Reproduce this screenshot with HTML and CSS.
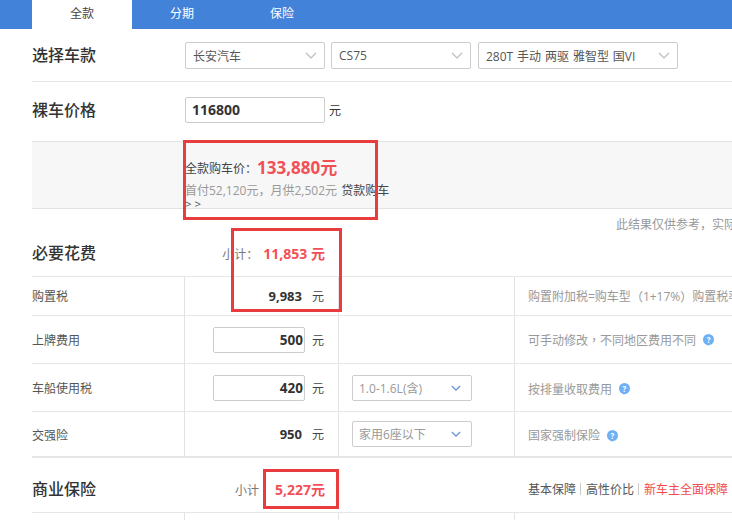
FILE: index.html
```html
<!DOCTYPE html>
<html lang="zh">
<head>
<meta charset="utf-8">
<title>购车计算</title>
<link rel="stylesheet" href="styles.css">
</head>
<body>
<nav class="tabs">
  <a class="tab active">全款</a>
  <a class="tab">分期</a>
  <a class="tab">保险</a>
</nav>
<main class="content">
  <section class="head-row choose">
    <h2 class="title">选择车款</h2>
    <div class="sel w140"><span>长安汽车</span><svg class="chev" viewBox="0 0 12 7"><path d="M1 1l5 5 5-5"/></svg></div>
    <div class="sel w140"><span>CS75</span><svg class="chev" viewBox="0 0 12 7"><path d="M1 1l5 5 5-5"/></svg></div>
    <div class="sel w200"><span class="spaced">280T 手动 两驱 雅智型 国VI</span><svg class="chev" viewBox="0 0 12 7"><path d="M1 1l5 5 5-5"/></svg></div>
  </section>
  <section class="head-row price">
    <h2 class="title">裸车价格</h2>
    <div class="input price-input">116800</div>
    <span class="unit-big">元</span>
  </section>
  <section class="summary">
    <p class="sum-line"><span>全款购车价<span class="p">：</span></span><b class="sum-num">133,880元</b></p>
    <p class="sum-sub"><span class="muted">首付52,120元<span class="p">，</span>月供2,502元</span> <span class="loan">贷款购车</span><span class="arrows">&gt; &gt;</span></p>
  </section>
  <p class="note">此结果仅供参考<span class="p">，</span>实际费用以当地缴费为准</p>
  <section class="sub-head need">
    <h2 class="title">必要花费</h2>
    <div class="subtotal"><span class="sub-label">小计<span class="p">：</span></span><b class="red">11,853 元</b></div>
  </section>
  <section class="row r1">
    <div class="c1">购置税</div>
    <div class="c2"><b>9,983</b><span class="unit">元</span></div>
    <div class="c3"></div>
    <div class="c4">购置附加税=购车型<span class="p">（</span>1+17%<span class="p">）</span>购置税率</div>
  </section>
  <section class="row r2">
    <div class="c1">上牌费用</div>
    <div class="c2"><div class="input num">500</div><span class="unit">元</span></div>
    <div class="c3"></div>
    <div class="c4">可手动修改<span class="p">，</span>不同地区费用不同<i class="help">?</i></div>
  </section>
  <section class="row r3">
    <div class="c1">车船使用税</div>
    <div class="c2"><div class="input num">420</div><span class="unit">元</span></div>
    <div class="c3"><div class="sel small"><span>1.0-1.6L(含)</span><svg class="chev blue" viewBox="0 0 12 7"><path d="M1 1l5 5 5-5"/></svg></div></div>
    <div class="c4 low">按排量收取费用<i class="help">?</i></div>
  </section>
  <section class="row r4">
    <div class="c1 low">交强险</div>
    <div class="c2"><b>950</b><span class="unit">元</span></div>
    <div class="c3"><div class="sel small"><span>家用6座以下</span><svg class="chev blue" viewBox="0 0 12 7"><path d="M1 1l5 5 5-5"/></svg></div></div>
    <div class="c4 low">国家强制保险<i class="help">?</i></div>
  </section>
  <section class="sub-head biz">
    <h2 class="title">商业保险</h2>
    <div class="subtotal"><span class="sub-label">小计</span><b class="red">5,227元</b></div>
    <div class="plans"><span>基本保障</span><i class="sep"></i><span>高性价比</span><i class="sep"></i><span class="plan-red">新车主全面保障</span></div>
  </section>
  <section class="row last">
    <div class="c1"></div><div class="c2"></div><div class="c3"></div><div class="c4"></div>
  </section>
</main>
<div class="mark m1"></div>
<div class="mark m2"></div>
<div class="mark m3"></div>
</body>
</html>
```
FILE: styles.css
```css
* { box-sizing: border-box; }
html, body { margin: 0; height: 520px; overflow: hidden; background: #fff; }
body {
  position: relative;
  width: 732px;
  font-family: "Open Sans", "Noto Sans CJK SC", sans-serif;
  font-size: 12px;
  color: #333;
}
p, h2 { margin: 0; }
.p { font-family: "Noto Sans CJK TC", sans-serif; }
.tabs { display: flex; height: 29px; padding-left: 32px; background: #4382d9; }
.tab { width: 100px; text-align: center; line-height: 27px; color: #fff; font-size: 12px; }
.tab.active { background: #fff; color: #444; }
.content { width: 700px; padding-left: 32px; box-sizing: content-box; }
.title { font-size: 16px; font-weight: 500; color: #333; line-height: 24px; width: 153px; flex: none; }
.head-row { display: flex; align-items: center; }
.choose { height: 53px; border-bottom: 1px solid #e6e6e6; width: 700px; gap: 6px; padding-top: 1px; }
.choose .title { margin-right: -6px; margin-bottom: 2px; }
.choose .w200 { margin-left: 1px; }
.price { height: 59px; padding-bottom: 4px; }
.sel {
  display: flex; align-items: center; justify-content: space-between;
  height: 27px; padding: 0 7px; border: 1px solid #ccc; border-radius: 2px;
  background: #fff; color: #555; font-size: 12px; flex: none;
}
.spaced { word-spacing: 0.8px; }
.w140 { width: 140px; }
.w200 { width: 200px; }
.chev { width: 12px; height: 7px; fill: none; stroke: #bbb; stroke-width: 1.2; }
.chev.blue { stroke: #6f9bd6; stroke-width: 1.6; width: 10px; height: 6px; }
.input {
  height: 26px; border: 1px solid #ccc; border-radius: 2px; background: #fff;
  font-weight: 700; font-size: 14px; color: #333; display: flex; align-items: center;
}
.price-input { width: 140px; padding-left: 6px; }
.unit-big { margin-left: 4px; font-size: 12px; color: #333; }
.summary {
  height: 68px; width: 700px; background: #f7f7f7;
  border-top: 1px solid #e2e2e2; border-bottom: 1px solid #e2e2e2;
  padding: 15px 0 0 153px;
}
.sum-line { display: flex; align-items: center; height: 22px; line-height: 22px; white-space: nowrap; color: #444; }
.sum-num { color: #f25056; font-size: 17px; font-weight: 700; }
.sum-sub { line-height: 14px; margin-top: 4px; font-size: 12px; white-space: nowrap; }
.muted { color: #999; }
.loan { margin-left: 1px; color: #444; }
.arrows { display: block; font-size: 11.5px; line-height: 12px; color: #555; }
.note { width: 700px; height: 29px; padding-left: 584px; line-height: 29px; color: #999; font-size: 12px; white-space: nowrap; overflow: hidden; }
.sub-head { display: flex; align-items: center; width: 700px; border-bottom: 1px solid #e6e6e6; }
.need { height: 39px; padding-bottom: 8px; }
.biz { height: 55px; padding-top: 8px; }
.subtotal { width: 140px; text-align: right; white-space: nowrap; }
.sub-label { color: #777; }
.need .sub-label { margin-right: 5px; }
.biz .sub-label { margin-right: 16px; }
.red { color: #f25056; font-size: 14px; font-weight: 700; }
.plans { display: flex; align-items: center; margin-left: 203px; white-space: nowrap; color: #555; }
.sep { width: 1px; height: 12px; background: #c9c9c9; margin: 0 5px 0 4px; }
.plan-red { color: #ee4b4b; }
.row {
  display: grid; grid-template-columns: 152px 155px 176px 217px; width: 700px;
  border-bottom: 1px solid #e6e6e6; font-size: 12px;
}
.r1 { height: 39px; }
.r2, .r3 { height: 48px; }
.r4 { height: 46px; border-bottom: 2px solid #e6e6e6; }
.last { height: 8px; border-bottom: 0; }
.row > div { display: flex; align-items: center; min-width: 0; }
.row > .low { padding-top: 2px; }
.c1 { color: #555; }
.c2 { justify-content: flex-end; padding-right: 14px; border-left: 1px solid #e2e2e2; border-right: 1px solid #e2e2e2; }
.c2 b { font-size: 13px; color: #333; margin-right: 3px; }
.unit { margin-left: 7px; color: #444; }
.row .c3 { padding-left: 13px; border-right: 1px solid #e2e2e2; }
.row .c4 { padding-left: 13px; color: #999; white-space: nowrap; }
.num { width: 92px; justify-content: flex-end; padding-right: 1px; font-size: 13.5px; }
.small { width: 120px; height: 26px; color: #999; padding: 0 10px 0 6px; }
.help {
  position: relative;
  display: inline-block; width: 11px; height: 11px; margin-left: 7px; border-radius: 50%;
  background: #6eb0f5; color: #fff; font-size: 8px; font-style: normal; font-weight: 700;
  line-height: 11px; text-align: center;
}
.help::after {
  content: ""; position: absolute; left: 3px; top: 9px;
  border-left: 2.5px solid transparent; border-right: 2.5px solid transparent; border-top: 3px solid #6eb0f5;
}
.mark { position: absolute; border: 3px solid #e83c3f; pointer-events: none; }
.m1 { left: 183px; top: 140px; width: 195px; height: 80px; }
.m2 { left: 231px; top: 228px; width: 111px; height: 84px; }
.m3 { left: 263px; top: 469px; width: 76px; height: 40px; }
```
